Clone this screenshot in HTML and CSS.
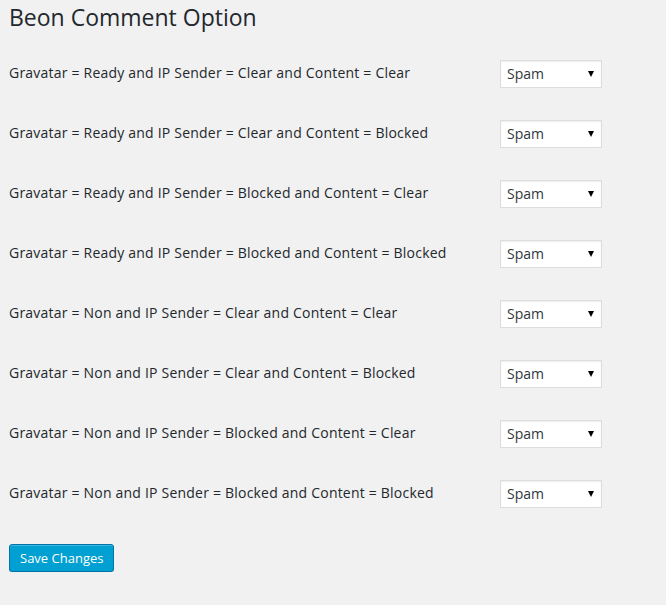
FILE: index.html
```html
<!DOCTYPE html>
<html>
<head>
<meta charset="utf-8">
<link rel="stylesheet" href="styles.css">
</head>
<body>
<div class="wrap">
  <h1 class="title">Beon Comment Option</h1>
  <form class="options">
    <div class="row"><label class="label">Gravatar = Ready and IP Sender = Clear and Content = Clear</label><div class="sel"><select><option>Spam</option></select></div></div>
    <div class="row"><label class="label">Gravatar = Ready and IP Sender = Clear and Content = Blocked</label><div class="sel"><select><option>Spam</option></select></div></div>
    <div class="row"><label class="label">Gravatar = Ready and IP Sender = Blocked and Content = Clear</label><div class="sel"><select><option>Spam</option></select></div></div>
    <div class="row"><label class="label">Gravatar = Ready and IP Sender = Blocked and Content = Blocked</label><div class="sel"><select><option>Spam</option></select></div></div>
    <div class="row"><label class="label">Gravatar = Non and IP Sender = Clear and Content = Clear</label><div class="sel"><select><option>Spam</option></select></div></div>
    <div class="row"><label class="label">Gravatar = Non and IP Sender = Clear and Content = Blocked</label><div class="sel"><select><option>Spam</option></select></div></div>
    <div class="row"><label class="label">Gravatar = Non and IP Sender = Blocked and Content = Clear</label><div class="sel"><select><option>Spam</option></select></div></div>
    <div class="row"><label class="label">Gravatar = Non and IP Sender = Blocked and Content = Blocked</label><div class="sel"><select><option>Spam</option></select></div></div>
    <div class="submit"><button type="button" class="button-primary">Save Changes</button></div>
  </form>
</div>
</body>
</html>
```
FILE: styles.css
```css
html, body {
  margin: 0;
  padding: 0;
  background: #f1f1f1;
}
body {
  font-family: "Open Sans", "Noto Sans", sans-serif;
  color: #23282d;
  font-size: 14px;
}
.wrap {
  padding: 3px 0 0 9px;
}
.title {
  margin: 0;
  font-size: 23px;
  font-weight: 400;
  line-height: 29.9px;
  color: #23282d;
}
.options {
  margin: 11px 0 0 0;
}
.row {
  display: grid;
  grid-template-columns: 491px 102px;
  align-items: center;
  height: 60px;
}
.label {
  font-size: 14px;
  font-weight: 400;
  letter-spacing: 0.21px;
  line-height: 20px;
  color: #23282d;
  margin-top: -2px;
}
.sel {
  position: relative;
  width: 102px;
  height: 28px;
}
.sel select {
  -webkit-appearance: none;
  appearance: none;
  box-sizing: border-box;
  width: 102px;
  height: 28px;
  margin: 0;
  padding: 0 0 0 6px;
  border: 1px solid #ddd;
  border-radius: 0;
  background: #fff;
  box-shadow: inset 0 1px 2px rgba(0,0,0,.07);
  font-family: "Open Sans", "Noto Sans", sans-serif;
  font-size: 14px;
  color: #32373c;
  line-height: 26px;
  outline: none;
}
.sel::after {
  content: "";
  position: absolute;
  right: 8px;
  top: 11px;
  width: 0;
  height: 0;
  border-left: 3.5px solid transparent;
  border-right: 3.5px solid transparent;
  border-top: 6px solid #000;
  pointer-events: none;
}
.submit {
  padding-top: 20px;
}
.button-primary {
  box-sizing: border-box;
  height: 28px;
  padding: 0 10px 1px;
  margin: 0;
  background: #00a0d2;
  border: 1px solid #0073aa;
  border-radius: 3px;
  box-shadow: inset 0 1px 0 rgba(120,200,230,.5), 0 1px 0 rgba(0,0,0,.15);
  color: #fff;
  font-family: "Open Sans", "Noto Sans", sans-serif;
  font-size: 13px;
  line-height: 26px;
  cursor: pointer;
}
```
